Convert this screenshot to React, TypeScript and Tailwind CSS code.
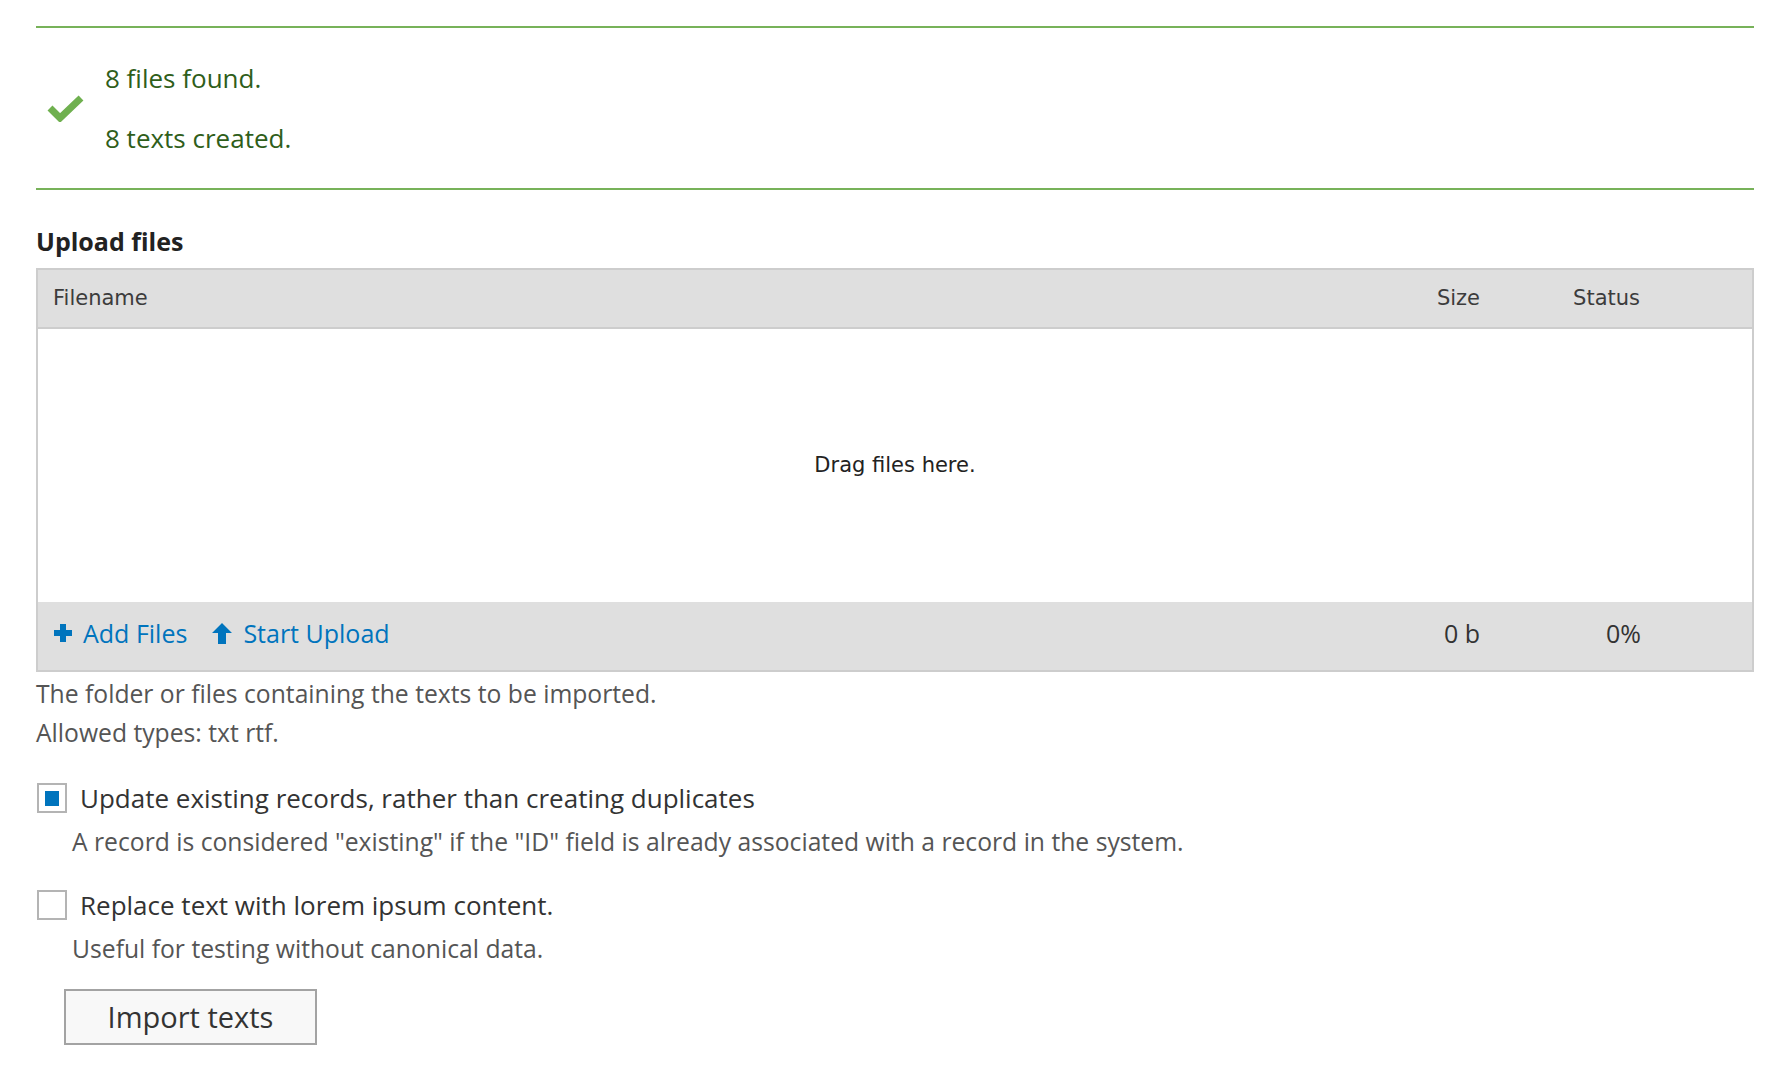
import React from 'react';

// 取り込み結果と、ファイルアップロードのフォーム
const sans = { fontFamily: '"Open Sans", "Liberation Sans", sans-serif' };
const grande = { fontFamily: '"DejaVu Sans", "Liberation Sans", sans-serif' };

function CheckIcon() {
  return (
    <svg width="37" height="27" viewBox="0 0 37 27" className="shrink-0">
      <polyline points="3,13 13,23 34,3" fill="none" stroke="#6fb04f" strokeWidth="7" />
    </svg>
  );
}

function PlusIcon() {
  return (
    <svg width="18" height="18" viewBox="0 0 18 18" className="shrink-0">
      <rect x="6" y="0" width="6" height="18" fill="#0074bd" />
      <rect x="0" y="6" width="18" height="6" fill="#0074bd" />
    </svg>
  );
}

function UpArrowIcon() {
  return (
    <svg width="20" height="21" viewBox="0 0 20 21" className="shrink-0">
      <polygon points="10,0 20,10 14,10 14,21 6,21 6,10 0,10" fill="#0074bd" />
    </svg>
  );
}

function Checkbox({ checked }: { checked: boolean }) {
  return (
    <div className="w-[30px] h-[30px] border-2 border-[#b4b4b4] bg-white flex items-center justify-center shrink-0">
      {checked && <div className="w-[14px] h-[15px] bg-[#0074bd]" />}
    </div>
  );
}

export default function App() {
  return (
    <div className="min-h-screen bg-white pl-[36px] pr-[26px] pt-[26px] pb-10" style={sans}>
      {/* メッセージ */}
      <div className="border-y-2 border-[#77b259] flex items-center pt-[31px] pb-[30px]">
        <div className="ml-[11px]">
          <CheckIcon />
        </div>
        <div className="ml-[21px] flex flex-col gap-[21px] text-[26px] leading-[39px] text-[#2f5e1a]">
          <div>8 files found.</div>
          <div>8 texts created.</div>
        </div>
      </div>

      <h2 className="mt-[36px] text-[25px] font-bold leading-[30px] text-[#222]">Upload files</h2>

      {/* アップロードテーブル */}
      <div className="mt-[12px] border-2 border-[#cdcdcd]">
        <div
          className="grid grid-cols-[1fr_100px_160px] h-[59px] items-center pl-[15px] pr-[112px] bg-[#dfdfdf] border-b-2 border-[#cdcdcd] text-[21px] text-[#3c3c3c]"
          style={grande}
        >
          <div>Filename</div>
          <div className="text-right">Size</div>
          <div className="text-right">Status</div>
        </div>
        <div className="h-[273px] flex items-center justify-center text-[21px] text-[#222]" style={grande}>
          Drag files here.
        </div>
        <div className="grid grid-cols-[1fr_100px_161px] items-center h-[68px] pb-[6px] pl-[16px] pr-[111px] bg-[#dfdfdf] text-[25px] leading-[34px]">
          <div className="flex items-center text-[#0074bd]">
            <PlusIcon />
            <span className="ml-[11px]">Add Files</span>
            <span className="ml-[25px] flex items-center">
              <UpArrowIcon />
            </span>
            <span className="ml-[11px]">Start Upload</span>
          </div>
          <div className="text-right text-[#333]">0 b</div>
          <div className="text-right text-[#333]">0%</div>
        </div>
      </div>

      <div className="mt-[2px] text-[24.7px] leading-[39px] text-[#555]">
        <div>The folder or files containing the texts to be imported.</div>
        <div>Allowed types: txt rtf.</div>
      </div>

      {/* オプション */}
      <div className="mt-[31px] flex items-center gap-[13px] ml-[1px]">
        <Checkbox checked />
        <span className="text-[26px] leading-[30px] text-[#333]">
          Update existing records, rather than creating duplicates
        </span>
      </div>
      <div className="mt-[9px] ml-[36px] text-[24.7px] leading-[39px] text-[#555]">
        A record is considered "existing" if the "ID" field is already associated with a record in the system.
      </div>

      <div className="mt-[29px] flex items-center gap-[13px] ml-[1px]">
        <Checkbox checked={false} />
        <span className="text-[26px] leading-[30px] text-[#333]">Replace text with lorem ipsum content.</span>
      </div>
      <div className="mt-[9px] ml-[36px] text-[24.7px] leading-[39px] text-[#555]">
        Useful for testing without canonical data.
      </div>

      <button className="mt-[21px] ml-[28px] w-[253px] h-[56px] border-2 border-[#a3a3a3] bg-[#f8f8f8] text-[29px] text-[#333]">
        Import texts
      </button>
    </div>
  );
}
